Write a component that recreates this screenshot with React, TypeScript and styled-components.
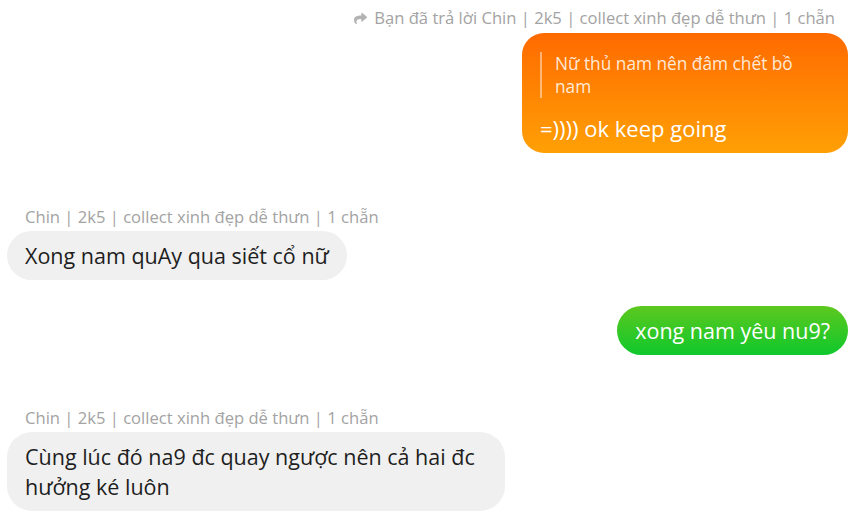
import React from "react";
import styled, { createGlobalStyle } from "styled-components";
import { FaShare } from "react-icons/fa";

const Global = createGlobalStyle`
  html, body { margin: 0; padding: 0; background: #fff; }
  body { font-family: "Open Sans", "Noto Sans", sans-serif; }
`;

const Chat = styled.div`
  width: 861px;
  height: 523px;
  box-sizing: border-box;
  padding: 7px 13px 0 7px;
  display: flex;
  flex-direction: column;
  overflow: hidden;
`;

const Row = styled.div<{ $mine?: boolean; $top?: number }>`
  display: flex;
  flex-direction: column;
  align-items: ${(p) => (p.$mine ? "flex-end" : "flex-start")};
  margin-top: ${(p) => p.$top ?? 0}px;
`;

const Meta = styled.div<{ $mine?: boolean }>`
  display: flex;
  align-items: center;
  gap: 7px;
  font-size: 16.6px;
  line-height: 22px;
  color: #a3a3a3;
  padding: ${(p) => (p.$mine ? "0 13px 0 0" : "0 0 0 18px")};
  margin-bottom: ${(p) => (p.$mine ? 4 : 3)}px;
  white-space: nowrap;
`;

const Bubble = styled.div<{ $variant: "orange" | "green" | "gray" }>`
  box-sizing: border-box;
  font-size: 21.5px;
  line-height: 30px;
  padding: 10px 18px 9px;
  border-radius: 25px;
  max-width: 498px;
  color: ${(p) => (p.$variant === "gray" ? "#1e1e1e" : "#fff")};
  background: ${(p) =>
    p.$variant === "orange"
      ? "linear-gradient(180deg, #ff6a00 0%, #ffa005 100%)"
      : p.$variant === "green"
      ? "linear-gradient(180deg, #5dc81f 0%, #0fc82c 100%)"
      : "#f0f0f0"};
`;

const OrangeBubble = styled(Bubble)`
  width: 326px;
  padding: 19px 18px 10px 18px;
  border-radius: 22px;
`;

const Quote = styled.div`
  border-left: 2px solid rgba(255, 255, 255, 0.45);
  padding-left: 13px;
  font-size: 17.3px;
  line-height: 23px;
  color: rgba(255, 255, 255, 0.85);
  margin-bottom: 15px;
`;

const Main = styled.div`
  font-size: 22px;
`;

export default function App() {
  return (
    <>
      <Global />
      <Chat>
        <Row $mine>
          <Meta $mine>
            <FaShare size={13} color="#b3b3b3" />
            <span>Bạn đã trả lời Chin | 2k5 | collect xinh đẹp dễ thưn | 1 chẵn</span>
          </Meta>
          <OrangeBubble $variant="orange">
            <Quote>Nữ thủ nam nên đâm chết bồ nam</Quote>
            <Main>=)))) ok keep going</Main>
          </OrangeBubble>
        </Row>
        <Row $top={53}>
          <Meta>Chin | 2k5 | collect xinh đẹp dễ thưn | 1 chẵn</Meta>
          <Bubble $variant="gray">Xong nam quAy qua siết cổ nữ</Bubble>
        </Row>
        <Row $mine $top={26}>
          <Bubble $variant="green">xong nam yêu nu9?</Bubble>
        </Row>
        <Row $top={52}>
          <Meta>Chin | 2k5 | collect xinh đẹp dễ thưn | 1 chẵn</Meta>
          <Bubble $variant="gray">Cùng lúc đó na9 đc quay ngược nên cả hai đc hưởng ké luôn</Bubble>
        </Row>
      </Chat>
    </>
  );
}
